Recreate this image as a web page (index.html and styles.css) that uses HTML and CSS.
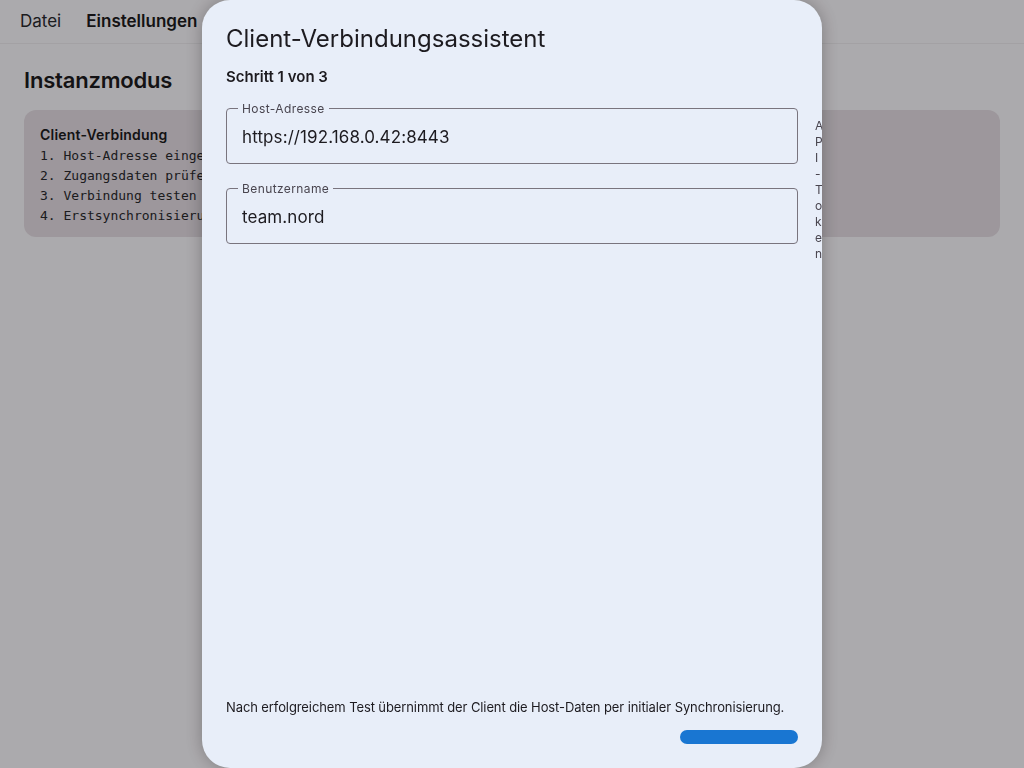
FILE: index.html
```html
<!DOCTYPE html>
<html lang="de">
<head>
<meta charset="utf-8">
<title>Instanzmodus</title>
<link rel="stylesheet" href="styles.css">
</head>
<body>
  <header class="menubar">
    <span class="menu-item">Datei</span>
    <span class="menu-item menu-item--active">Einstellungen</span>
  </header>

  <main class="page">
    <h1 class="page-title">Instanzmodus</h1>
    <section class="card">
      <h2 class="card-title">Client-Verbindung</h2>
      <ol class="steps">
        <li>1. Host-Adresse eingeben</li>
        <li>2. Zugangsdaten prüfen</li>
        <li>3. Verbindung testen</li>
        <li>4. Erstsynchronisierung starten</li>
      </ol>
    </section>
  </main>

  <div class="scrim"></div>

  <div class="dialog" role="dialog" aria-labelledby="dlg-title">
    <h2 class="dialog-title" id="dlg-title">Client-Verbindungsassistent</h2>
    <p class="dialog-step">Schritt 1 von 3</p>

    <div class="form-row">
      <div class="fields">
        <div class="field">
          <span class="field-label">Host-Adresse</span>
          <span class="field-value">https://192.168.0.42:8443</span>
        </div>
        <div class="field">
          <span class="field-label">Benutzername</span>
          <span class="field-value">team.nord</span>
        </div>
      </div>
      <div class="token">API-Token</div>
    </div>

    <p class="dialog-note">Nach erfolgreichem Test übernimmt der Client die Host-Daten per initialer Synchronisierung.</p>
    <div class="dialog-actions">
      <button class="btn-primary" type="button"></button>
    </div>
  </div>
</body>
</html>
```

FILE: styles.css
```css
* {
  box-sizing: border-box;
}

html, body {
  margin: 0;
  padding: 0;
  height: 100%;
}

body {
  font-family: Inter, "Noto Sans", sans-serif;
  background: #fdfbff;
  color: #1d1b20;
  overflow: hidden;
}

/* top menu */
.menubar {
  display: flex;
  align-items: center;
  gap: 25px;
  height: 44px;
  padding: 0 20px 1px;
  border-bottom: 1px solid #f0eef2;
  font-size: 17px;
}

.menu-item {
  color: #2a2a2e;
  line-height: 20px;
}

.menu-item--active {
  font-weight: 600;
  color: #1d1b20;
}

/* page body */
.page {
  padding: 23px 24px 0;
}

.page-title {
  margin: 0 0 17px;
  font-size: 22px;
  line-height: 26px;
  font-weight: 600;
  letter-spacing: -0.2px;
}

.card {
  background: #e7dfe6;
  border-radius: 12px;
  padding: 15px 16px 11px;
}

.card-title {
  margin: 0 0 1px;
  font-size: 14px;
  line-height: 20px;
  font-weight: 600;
  letter-spacing: 0.2px;
}

.steps {
  list-style: none;
  margin: 0;
  padding: 0;
  font-family: "DejaVu Sans Mono", "Liberation Mono", monospace;
  font-size: 13px;
  line-height: 20px;
  color: #2b2a2e;
}

/* modal */
.scrim {
  position: fixed;
  inset: 0;
  background: rgba(0, 0, 0, 0.32);
}

.dialog {
  position: fixed;
  top: 0;
  left: 202px;
  width: 620px;
  height: 768px;
  display: flex;
  flex-direction: column;
  padding: 24px 24px 24px;
  background: #e8eef9;
  border-radius: 28px;
  box-shadow: 0 0 18px rgba(0, 0, 0, 0.28);
  overflow: hidden;
}

.dialog-title {
  margin: 1px 0 0;
  font-size: 24px;
  line-height: 28px;
  font-weight: 400;
  color: #1d1b20;
}

.dialog-step {
  margin: 14px 0 0;
  font-size: 15px;
  line-height: 20px;
  font-weight: 600;
  color: #1d1b20;
}

.form-row {
  display: flex;
  gap: 17px;
  margin-top: 13px;
  flex: 1;
  min-height: 0;
}

.fields {
  flex: 0 0 100%;
  display: flex;
  flex-direction: column;
  gap: 24px;
  padding-top: 8px;
}

.field {
  position: relative;
  height: 56px;
  border: 1px solid #79747e;
  border-radius: 4px;
  display: flex;
  align-items: center;
  padding: 2px 15px 0;
}

.field-label {
  position: absolute;
  top: -8px;
  left: 11px;
  padding: 0 4px;
  background: #e8eef9;
  font-size: 12px;
  line-height: 16px;
  letter-spacing: 0.4px;
  color: #49454f;
}

.field-value {
  font-size: 17px;
  line-height: 24px;
  letter-spacing: 0.1px;
  color: #1d1b20;
}

.token {
  flex: 0 0 7px;
  width: 7px;
  margin-top: 18px;
  word-break: break-all;
  font-size: 12px;
  line-height: 16px;
  color: #49454f;
}

.dialog-note {
  margin: 0;
  font-size: 13px;
  line-height: 18px;
  letter-spacing: -0.1px;
  color: #1d1b20;
}

.dialog-actions {
  display: flex;
  justify-content: flex-end;
  margin-top: 14px;
}

.btn-primary {
  width: 118px;
  height: 14px;
  border: 0;
  padding: 0;
  border-radius: 7px;
  background: #1976d2;
}
```
